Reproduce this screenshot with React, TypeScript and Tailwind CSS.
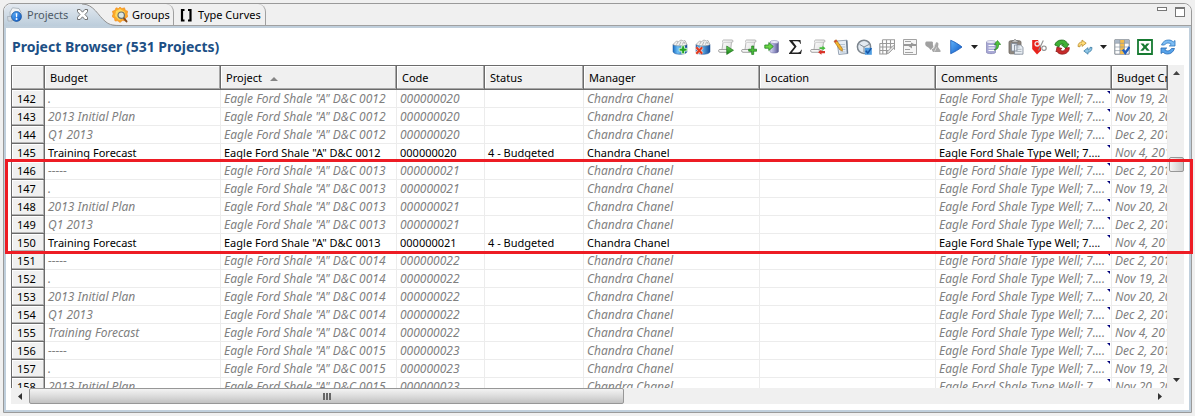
import type { ReactNode } from "react";

type Row = {
  id: number;
  budget: string;
  project: string;
  code: string;
  status: string;
  created: string;
  active: boolean;
};

const cycle = [
  { budget: "-----", created: "Dec 2, 2013" },
  { budget: ".", created: "Nov 19, 2013" },
  { budget: "2013 Initial Plan", created: "Nov 20, 2013" },
  { budget: "Q1 2013", created: "Dec 2, 2013" },
  { budget: "Training Forecast", created: "Nov 4, 2013" },
];

const rows: Row[] = Array.from({ length: 17 }, (_, i) => {
  const id = 142 + i;
  const group = Math.floor((id - 141) / 5);
  const step = cycle[(id - 141) % 5];
  const active = id === 145 || id === 150;
  return {
    id,
    budget: step.budget,
    project: `Eagle Ford Shale "A" D&C 00${12 + group}`,
    code: `0000000${20 + group}`,
    status: active ? "4 - Budgeted" : "",
    created: step.created,
    active,
  };
});

function Icon({ children }: { children: ReactNode }) {
  return (
    <svg viewBox="0 0 16 16" className="size-4 shrink-0" aria-hidden="true">
      {children}
    </svg>
  );
}

function Gradients() {
  return (
    <svg className="absolute size-0" aria-hidden="true">
      <defs>
        <linearGradient id="blue" x1="0" x2="1">
          <stop offset="0" stopColor="#1b6fc4" />
          <stop offset=".35" stopColor="#6fc0f5" />
          <stop offset="1" stopColor="#124a98" />
        </linearGradient>
        <linearGradient id="play" x1="0" y1="0" x2="1" y2="1">
          <stop offset="0" stopColor="#62b4fb" />
          <stop offset="1" stopColor="#0b56c4" />
        </linearGradient>
        <linearGradient id="paper" x1="0" y1="0" x2="1" y2="1">
          <stop offset="0" stopColor="#ffffff" />
          <stop offset="1" stopColor="#dadada" />
        </linearGradient>
        <linearGradient id="db" x1="0" x2="1">
          <stop offset="0" stopColor="#dcdcf6" />
          <stop offset=".5" stopColor="#9b9bcc" />
          <stop offset="1" stopColor="#55558c" />
        </linearGradient>
        <linearGradient id="green" x1="0" y1="0" x2="0" y2="1">
          <stop offset="0" stopColor="#6fd85a" />
          <stop offset="1" stopColor="#127a14" />
        </linearGradient>
        <linearGradient id="activeTab" x1="0" y1="0" x2="0" y2="1">
          <stop offset="0" stopColor="#e3e9f0" />
          <stop offset="1" stopColor="#bccddb" />
        </linearGradient>
      </defs>
    </svg>
  );
}

function Barrel() {
  return (
    <>
      <path d="M1 5.500h14v7c0 1.600-3 2.800-7 2.800s-7-1.200-7-2.800z" fill="url(#blue)" stroke="#174f94" strokeWidth=".5" />
      <path d="M1 5.500 4.500 2l2 .6L9 1l2.500 1 1.500-.5 2 4c-1.500 1.800-12.500 1.800-14 0z" fill="#f2f2f2" stroke="#8d8d8d" strokeWidth=".6" />
      <path d="M4.500 5.500 6 3M7.500 6 9 2.500M10.500 5.500l1-2.500M13 5l-.5-2" stroke="#999" strokeWidth=".7" fill="none" />
    </>
  );
}

function Scroll() {
  return (
    <>
      <path d="M5.500 1h8.500c1.400 0 1.400 2.200 0 2.200h-.5L12.500 12.500H3.700L5 3.500C4.300 2.500 4.500 1.200 5.500 1z" fill="url(#paper)" stroke="#a6a6a6" strokeWidth=".8" />
      <path d="M1.200 10.500h8.300c-.6 1 0 2.800 1 2.800H2C.4 13.300.2 11 1.200 10.500z" fill="#f6f6f6" stroke="#8d8d8d" strokeWidth=".8" />
      <path d="M6 3.300h7.500" stroke="#bbb" strokeWidth=".7" />
    </>
  );
}

function ProjectsIcon() {
  return (
    <Icon>
      <path d="M3 5 5.500.8l6.500.7 2 4-1 8H3.500z" fill="#f1f3f5" stroke="#9aa3ac" strokeWidth=".7" />
      <path d="M.5 9.500h4.500v4.500H1z" fill="#d4dbe2" stroke="#9aa3ac" strokeWidth=".6" />
      <circle cx="9.500" cy="9.500" r="4.900" fill="url(#play)" stroke="#134f9b" strokeWidth=".8" />
      <path d="M8.700 6.200h1.700l-.3 4H9z" fill="#fff" />
      <circle cx="9.550" cy="12" r="1" fill="#fff" />
    </Icon>
  );
}

function GroupsIcon() {
  return (
    <Icon>
      <path d="m8 0 1.800 1.500L12.500.8l.8 2.500 2.500 1L15 7l1 2.500-2.300 1.500-.7 2.700-2.700-.1L8 15.500l-2.200-1.700-2.800.2-.6-2.800L0 9.500 1.200 7 .4 4.300 3 3.300 4 .8l2.500.7z" fill="#fba92a" stroke="#f08a1c" strokeWidth=".6" />
      <path d="m8 2 5 3-1 6-5 2-4-4 1-5z" fill="#ffd75a" />
      <path d="m11.500 10.800 3 3.600" stroke="#8a4b19" strokeWidth="2" strokeLinecap="round" />
      <circle cx="9.200" cy="8.200" r="3.200" fill="#d7e9ee" fillOpacity=".9" stroke="#6a6f6b" strokeWidth="1.200" />
    </Icon>
  );
}

function BracketsIcon() {
  return (
    <Icon>
      <path d="M6.500 3H4v10.500h2.500M10 3h2.500v10.500H10" fill="none" stroke="#000" strokeWidth="2.200" />
    </Icon>
  );
}

const tools: { label: string; icon: ReactNode; menu?: boolean }[] = [
  {
    label: "Add project",
    icon: (
      <>
        <Barrel />
        <path d="M9.700 6.800h2.800v2.500H15v2.800h-2.500v2.600H9.700v-2.600H7.200V9.300h2.500z" fill="#25a425" stroke="#eaffdf" strokeWidth=".8" />
      </>
    ),
  },
  {
    label: "Delete project",
    icon: (
      <>
        <Barrel />
        <path d="m1.300 8.300 5.900 6.400M7.200 8.300l-5.900 6.400" stroke="#ffd9d0" strokeWidth="3.200" />
        <path d="m1.300 8.300 5.900 6.400M7.200 8.300l-5.900 6.400" stroke="#dd3a22" strokeWidth="2" />
      </>
    ),
  },
  {
    label: "Run script",
    icon: (
      <>
        <Scroll />
        <path d="M8.700 7v8.500l6.800-4.250z" fill="url(#green)" stroke="#176b14" strokeWidth=".6" />
      </>
    ),
  },
  {
    label: "Add script",
    icon: (
      <>
        <Scroll />
        <path d="M10.700 7h2v3.200h3v2h-3v3.200h-2v-3.200h-3v-2h3z" fill="#4cc03a" stroke="#17771a" strokeWidth=".7" />
      </>
    ),
  },
  {
    label: "Import",
    icon: (
      <>
        <path d="M6 3v9.500c0 2 8.500 2 8.500 0V3z" fill="url(#db)" stroke="#6a6aa0" strokeWidth=".5" />
        <ellipse cx="10.250" cy="3" rx="4.250" ry="1.500" fill="#ececfa" stroke="#8484b4" strokeWidth=".6" />
        <path d="M.8 6h4V3.600L9.300 7.500l-4.500 4V9.200h-4z" fill="#6bd445" stroke="#1f8420" strokeWidth=".8" />
      </>
    ),
  },
  {
    label: "Totals",
    icon: (
      <path d="M2.200 1h11.300l.4 3.800h-.8c-.4-1.800-1-2.500-2.900-2.500H5.600l4 5.200-4.700 5.900h5.900c2 0 2.700-.8 3.300-2.700h.8L14 15H2v-.8l5.300-6.500L2.200 1.800z" fill="#222" />
    ),
  },
  {
    label: "Sync script",
    icon: (
      <>
        <Scroll />
        <path d="M9.500 8.300h3V6.800l3 2.400-3 2.300v-1.400h-3z" fill="#46bd3c" />
        <path d="M15 12h-3.500v-1.400L8 13.300l3.500 2.500v-1.500H15z" fill="#d9342a" />
      </>
    ),
  },
  {
    label: "Edit notes",
    icon: (
      <>
        <path d="m4 2 10-.8.8 13.300-9 1z" fill="#e6edf5" stroke="#8291a3" strokeWidth=".8" />
        <path d="m13.600 1.500.8 13" stroke="#69798c" strokeWidth="1.400" />
        <path d="M6 5.500h6M6.300 8h6M6.600 10.500h5.800M7 13h5.500" stroke="#9fb1c4" strokeWidth=".7" />
        <path d="m1 2.200 2.200-1.400 6 8.500.2 2.900-2.600-1.400z" fill="#f3b52c" stroke="#9c6417" strokeWidth=".6" />
        <path d="m1 2.200 2.200-1.400 1 1.500L2.100 3.800z" fill="#cf4937" />
      </>
    ),
  },
  {
    label: "Schedule",
    icon: (
      <>
        <circle cx="8" cy="7.800" r="6.600" fill="#e3eaf1" stroke="#7c858e" strokeWidth="1.500" />
        <path d="M8 8 3.500 5.300M8 8l5-2.500M8 8v5" stroke="#75808b" strokeWidth=".9" />
        <path d="M8.800 8.800h7v7h-7z" fill="#4d9be0" />
        <path d="m9.800 11.800 2 2.300 3.500-5" fill="none" stroke="#1454a6" strokeWidth="1.500" />
      </>
    ),
  },
  {
    label: "Edit table",
    icon: (
      <>
        <path d="M3.500.700h12v10M3.500.7v3.800m4-3.800v14m4-14v9M.8 4.500h14.700M.8 8h14.700M.8 11.500h8.500M.8 4.500V15h7M3.800 4.500V15" fill="none" stroke="#9a9a9a" strokeWidth="1.100" />
        <path d="m7.500 15 .8-2.600 6-6 1.500 1.600-5.800 6z" fill="#e2e2e2" stroke="#8d8d8d" strokeWidth=".8" />
      </>
    ),
  },
  {
    label: "Form view",
    icon: (
      <>
        <path d="M1.500.500h13v15h-13z" fill="#f6f6f6" stroke="#a3a3a3" />
        <path d="M3 2.500h6M3 10.500h5M3 13.500h8" stroke="#a3a3a3" strokeWidth="1" />
        <path d="M2 5h7V3.500L12 5h2v2h-4v2.500L6.500 7H2z" fill="#989898" />
      </>
    ),
  },
  {
    label: "Group members",
    icon: (
      <>
        <path d="M1.500 2.500h5c1.300 0 1.800 1 1.300 2.500l.7 3L7 9.500 5.500 11 4 9 1 7C-.2 5.500 0 3 1.500 2.500z" fill="#a0a0a0" />
        <path d="M11 3.500c1.600-.6 2.700.5 2.400 2l-.4 2.500 2.500 3.500V13H8l-1.500-2.500L9 9l.8-3z" fill="#a9a9a9" />
        <path d="m8.500 9 1.800-4.500M9.500 12.500l2-4" stroke="#e3e3e3" strokeWidth=".8" />
      </>
    ),
  },
  {
    label: "Run",
    menu: true,
    icon: <path d="M2.700 1.300v13.400c4-1.800 8.200-4.300 11.300-6.700C10.900 5.500 6.700 2.900 2.700 1.300z" fill="url(#play)" stroke="#1457b6" strokeWidth=".8" />,
  },
  {
    label: "Export report",
    icon: (
      <>
        <path d="M1.500 3v10.500c0 1.500 9 1.500 9 0V3z" fill="#a9a9d6" stroke="#7474a8" strokeWidth=".6" />
        <ellipse cx="6" cy="3" rx="4.500" ry="1.400" fill="#f4f4fc" stroke="#8f8fbd" strokeWidth=".6" />
        <path d="M3.500 6.500h6M3.500 9h6M3.500 11.500h6" stroke="#fff" strokeWidth="1.200" />
        <path d="M9 11c2.200-.7 2.500-2 2.500-5.500H9.300l3.200-4 3.200 4h-2.100C13.600 9 12.500 10.800 9 11z" fill="#4fc23a" stroke="#1d7d1c" strokeWidth=".6" />
      </>
    ),
  },
  {
    label: "Paste",
    icon: (
      <>
        <rect x="1" y="1.800" width="12" height="13" rx="1.500" fill="#8f877f" stroke="#6a645e" strokeWidth=".8" />
        <path d="M4 3.200V1.600h1.700c.4-1.400 2.200-1.400 2.600 0H10v1.600z" fill="#d4d4d4" stroke="#666" strokeWidth=".7" />
        <path d="M3.500 4.500H9v7.500H3.500zM6.500 6h6l2.500 2.200v7H6.500z" fill="#e8edf3" stroke="#7c8794" strokeWidth=".8" />
        <path d="M8.500 8h3M8.500 10.300h5M8.500 12.500h5" stroke="#a0a9b3" strokeWidth=".8" />
      </>
    ),
  },
  {
    label: "Percent tag",
    icon: (
      <>
        <path d="M1.200 1H7l3 7v3.500L6 15.500 1.200 10z" fill="#e8231c" />
        <circle cx="6.200" cy="4.800" r="2.200" fill="#e8231c" stroke="#f0e4e4" strokeWidth="1.300" />
        <path d="m12.300 1.500-4.800 10" stroke="#8e8e8e" strokeWidth="1.100" />
        <circle cx="13" cy="9.200" r="2.200" fill="#fff" stroke="#8e8e8e" strokeWidth="1.100" />
      </>
    ),
  },
  {
    label: "Recalculate",
    icon: (
      <>
        <path d="M.8 6c.5-3 3.500-5 7-5 3 0 5 1.300 5.700 4L15 5l-3 4.500L7.500 6l2-.5C8 4.500 5.500 5 5 8z" fill="#3fb036" stroke="#176315" strokeWidth=".7" />
        <path d="M15.300 8.500c.2 4-3 6.700-7 6.700-2.500 0-4.500-1-5.500-3L2 13 3 8l5 1.500-2 1.300c2 2 5 1.200 5.700-1.800z" fill="#c62a2a" stroke="#831412" strokeWidth=".7" />
      </>
    ),
  },
  {
    label: "Swap",
    menu: true,
    icon: (
      <>
        <path d="M1 7.500C1 4.500 2.700 3 5 3V1l4.200 3.200L5 7.400V5.300C3.800 5.300 3 6 3 7.800z" fill="#ffdc7a" stroke="#b98a2a" strokeWidth=".8" />
        <path d="M15 8.500c0 3-1.700 4.700-4 4.700v2L6.800 12 11 8.700v2.100c1.200 0 2-.7 2-2.500z" fill="#8fc6e6" stroke="#3c7ca5" strokeWidth=".8" />
      </>
    ),
  },
  {
    label: "Choose columns",
    icon: (
      <>
        <path d="M.8.800h14.400v14.400H.8z" fill="#fff" stroke="#7d858e" strokeWidth="1" />
        <path d="M1 1h14v3H1z" fill="#aab7c6" />
        <path d="M6 1h4.500v14H6z" fill="#f5bc4a" />
        <path d="M1 4.300h14M1 8h14M1 11.600h14M5.800 1v14M10.500 1v14" stroke="#8d98a3" strokeWidth=".7" />
        <path d="m8.800 10.500 2.500 3.500 4.200-6" fill="none" stroke="#225fc0" strokeWidth="2.200" />
      </>
    ),
  },
  {
    label: "Export to Excel",
    icon: (
      <>
        <path d="M1 1h14v14H1z" fill="#fff" stroke="#167a31" strokeWidth="1.800" />
        <path d="M3.500 4.500h3L8 6.600l1.700-2.100h2.900L9.500 8l3.300 3.800h-3L8 9.600l-1.800 2.200H3.300L6.500 8z" fill="#167a31" />
      </>
    ),
  },
  {
    label: "Refresh",
    icon: (
      <>
        <path d="M1.500 6C2.800 2.500 5.500 1 8.500 1c2 0 3.500.6 4.700 2l1.800-1.500V7H9.300l1.900-1.800C9 3.500 6 3.700 4.500 6z" fill="#7dbdf4" stroke="#2a73bd" strokeWidth=".8" />
        <path d="M14.500 9.500c-1.300 3.800-4 5.500-7 5.500-1.900 0-3.400-.7-4.500-2L1 14.500V9h5.700l-1.900 1.800c2.200 1.800 5 1.400 6.700-1.300z" fill="#57a3ea" stroke="#2468b2" strokeWidth=".8" />
      </>
    ),
  },
];

function TabStrip() {
  return (
    <div className="relative flex h-[22px] items-center border-b border-[#a0a0a0] bg-[#f0f0f0]">
      <svg viewBox="0 0 118 22" className="absolute left-0 top-0 h-[22px] w-[118px]" aria-hidden="true">
        <path d="M0 22V0h78c12 0 16 12 24 18 4 3 7 4 16 4z" fill="url(#activeTab)" />
        <path d="M78 0c12 0 16 12 24 18 4 3 7 3.500 16 3.500" fill="none" stroke="#909090" />
      </svg>
      <div role="tablist" className="relative flex h-full w-full items-center text-[11px] leading-4">
        <button role="tab" aria-selected="true" className="flex w-[108px] items-center gap-1 pl-[3px] text-[#4d5966]">
          <ProjectsIcon />
          <span className="w-[46px] text-left">Projects</span>
          <svg viewBox="0 0 11 11" className="size-[11px]" aria-hidden="true">
            <path d="M.5.500h2.600l2.400 2.700L7.900.5h2.600v2.200L8 5.500l2.500 2.800v2.200H7.900L5.500 7.800l-2.400 2.700H.5V8.300L3 5.500.5 2.700z" fill="#fff" stroke="#666" strokeWidth=".9" />
          </svg>
        </button>
        <button role="tab" aria-selected="false" className="flex h-full w-[62px] items-center gap-1 rounded-tr-lg border-r border-[#a0a0a0] text-black">
          <GroupsIcon />
          Groups
        </button>
        <button role="tab" aria-selected="false" className="flex h-full w-[92px] items-center gap-1 rounded-tr-lg border-r border-[#a0a0a0] pl-1 text-black">
          <BracketsIcon />
          Type Curves
        </button>
        <div className="ml-auto flex h-full gap-2 pr-1.5 pt-[3px]">
          <button aria-label="Minimize" className="h-1 w-2.5 border border-[#777] bg-white" />
          <button aria-label="Maximize" className="h-2.5 w-2.5 border border-t-2 border-[#777] bg-white" />
        </div>
      </div>
    </div>
  );
}

function Toolbar() {
  return (
    <div role="toolbar" className="flex items-center gap-[7px]">
      {tools.map((t) =>
        t.menu ? (
          <button key={t.label} aria-label={t.label} className="flex w-[30px] items-center justify-between">
            <Icon>{t.icon}</Icon>
            <svg viewBox="0 0 7 4" className="h-1 w-[7px]" aria-hidden="true">
              <path d="M0 0h7L3.500 4z" fill="#222" />
            </svg>
          </button>
        ) : (
          <button key={t.label} aria-label={t.label}>
            <Icon>{t.icon}</Icon>
          </button>
        ),
      )}
    </div>
  );
}

const columns = [
  { name: "", width: "w-[34px]" },
  { name: "Budget", width: "w-44" },
  { name: "Project", width: "w-44" },
  { name: "Code", width: "w-22" },
  { name: "Status", width: "w-[99px]" },
  { name: "Manager", width: "w-44" },
  { name: "Location", width: "w-44" },
  { name: "Comments", width: "w-44" },
  { name: "Budget Created", width: "w-auto" },
];

function Cell({ children, muted }: { children?: ReactNode; muted: boolean }) {
  return (
    <td
      className={
        muted
          ? "relative overflow-hidden border-b border-r border-[#ececec] pl-[3px] text-[12px] leading-4 italic text-[#7f7f7f]"
          : "relative overflow-hidden border-b border-r border-[#ececec] pl-[3px] text-black"
      }
    >
      {children}
    </td>
  );
}

function ProjectTable() {
  return (
    <table className="w-full table-fixed border-separate border-spacing-0 whitespace-nowrap text-[11px] leading-4">
      <thead>
        <tr className="h-[25px]">
          {columns.map((c, i) => (
            <th
              key={i}
              scope="col"
              className={`${c.width} ${i === 0 ? "border-l" : "pl-[5px]"} overflow-hidden border-y border-r border-[#6b6b6b] bg-[#f0f0f0] text-left font-normal text-black shadow-[inset_-1px_-1px_0_#a8a8a8,inset_1px_1px_0_#ffffff]`}
            >
              {c.name}
              {c.name === "Project" && (
                <svg viewBox="0 0 8 4" className="ml-2 inline h-1 w-2 align-middle" aria-hidden="true">
                  <path d="M0 4h8L4 0z" fill="#858585" />
                </svg>
              )}
            </th>
          ))}
        </tr>
      </thead>
      <tbody>
        {rows.map((r) => (
          <tr key={r.id} className="h-[18px]">
            <th
              scope="row"
              className="border-b border-x border-[#6b6b6b] bg-[#f0f0f0] pl-[5px] text-left font-normal text-black shadow-[inset_-1px_-1px_0_#b4b4b4,inset_1px_1px_0_#ffffff]"
            >
              {r.id}
            </th>
            <Cell muted={!r.active}>{r.budget}</Cell>
            <Cell muted={!r.active}>{r.project}</Cell>
            <Cell muted={!r.active}>{r.code}</Cell>
            <Cell muted={!r.active}>{r.status}</Cell>
            <Cell muted={!r.active}>Chandra Chanel</Cell>
            <Cell muted={!r.active} />
            <Cell muted={!r.active}>
              Eagle Ford Shale Type Well; 7....
              <svg viewBox="0 0 3 3" className="absolute right-px top-px size-[3px]" aria-hidden="true">
                <path d="M0 0h3v3z" fill="#00007b" />
              </svg>
            </Cell>
            <Cell muted>{r.created}</Cell>
          </tr>
        ))}
      </tbody>
    </table>
  );
}

function VerticalScrollbar() {
  return (
    <div className="flex w-4 shrink-0 flex-col items-center bg-[#f0f0f0]">
      <button aria-label="Scroll up" className="flex h-4 w-full items-center justify-center">
        <svg viewBox="0 0 7 4" className="h-1 w-[7px]" aria-hidden="true">
          <path d="M0 4h7L3.500 0z" fill="#444" />
        </svg>
      </button>
      <div className="h-[76px] shrink-0" />
      <div className="h-[15px] w-[15px] shrink-0 rounded-xs border border-[#979797] bg-linear-to-r from-[#f5f5f5] to-[#c9c9c9]" />
      <button aria-label="Scroll down" className="mt-auto flex h-4 w-full items-center justify-center">
        <svg viewBox="0 0 7 4" className="h-1 w-[7px]" aria-hidden="true">
          <path d="M0 0h7L3.500 4z" fill="#333" />
        </svg>
      </button>
    </div>
  );
}

function HorizontalScrollbar() {
  return (
    <div className="flex h-4 shrink-0 items-center bg-[#f0f0f0] pr-4">
      <button aria-label="Scroll left" className="flex h-full w-[18px] items-center justify-center">
        <svg viewBox="0 0 4 7" className="h-[7px] w-1" aria-hidden="true">
          <path d="M4 0v7L0 3.500z" fill="#333" />
        </svg>
      </button>
      <div className="h-full flex-1">
        <div className="flex h-4 w-[53%] items-center justify-center gap-px rounded-xs border border-[#979797] bg-linear-to-b from-[#f3f3f3] via-[#dcdcdc] to-[#c2c2c2]">
          <span className="h-[7px] w-0.5 bg-[#666]" />
          <span className="h-[7px] w-0.5 bg-[#666]" />
          <span className="h-[7px] w-0.5 bg-[#666]" />
        </div>
      </div>
      <button aria-label="Scroll right" className="flex h-full w-4 items-center justify-center">
        <svg viewBox="0 0 4 7" className="h-[7px] w-1" aria-hidden="true">
          <path d="M0 0v7l4-3.500z" fill="#333" />
        </svg>
      </button>
    </div>
  );
}

export default function App() {
  return (
    <div className="flex h-screen flex-col bg-[#f0f0f0] p-[3px] font-['Noto_Sans','Open_Sans',sans-serif]">
      <Gradients />
      <main className="flex min-h-0 flex-1 flex-col rounded-t-lg border border-[#9a9a9a] bg-white">
        <div className="overflow-hidden rounded-t-lg">
          <TabStrip />
        </div>
        <div className="flex min-h-0 flex-1 flex-col border-2 border-[#c0cfdc] pb-1.5 px-[5px]">
          <header className="flex h-[37px] shrink-0 items-center justify-between pl-px pr-2">
            <h1 className="text-[14px] font-bold leading-5 text-[#1c4f85]">Project Browser (531 Projects)</h1>
            <Toolbar />
          </header>
          <div className="relative flex min-h-0 flex-1 flex-col">
            <div className="flex min-h-0 flex-1">
              <div className="min-w-0 flex-1 overflow-hidden">
                <ProjectTable />
              </div>
              <VerticalScrollbar />
            </div>
            <HorizontalScrollbar />
            <div className="pointer-events-none absolute -left-1.5 -right-[9px] top-[94px] h-[95px] border-3 border-[#ed1c24]" />
          </div>
        </div>
      </main>
    </div>
  );
}
